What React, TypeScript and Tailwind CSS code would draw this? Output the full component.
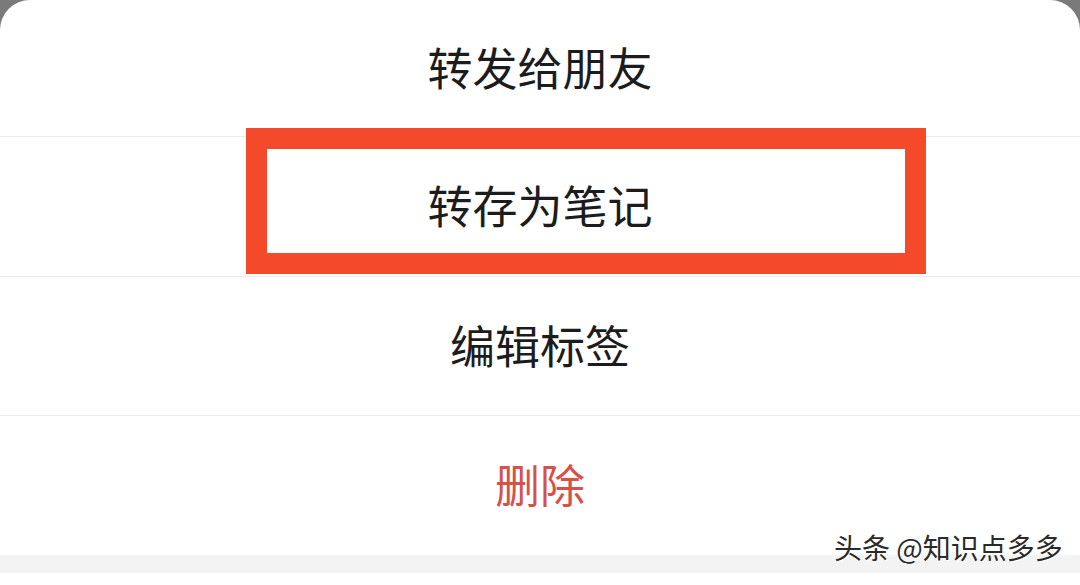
import React from "react";

export default function App() {
  const font = "font-['Noto_Sans_CJK_SC','Noto_Sans',sans-serif]";
  return (
    <div className={`relative w-[1080px] h-[585px] overflow-hidden bg-[#7a7a7a] ${font}`}>
      <div className="flex h-full flex-col rounded-t-[30px] bg-white">
        <div className="flex h-[137px] items-center justify-center border-b border-[#ececec] pb-[4px] text-[45px] leading-none text-[#1c1c1c]">
          转发给朋友
        </div>
        <div className="flex h-[140px] items-center justify-center border-b border-[#ececec] pb-[4px] text-[45px] leading-none text-[#1c1c1c]">
          转存为笔记
        </div>
        <div className="flex h-[139px] items-center justify-center border-b border-[#ececec] pb-[4px] text-[45px] leading-none text-[#1c1c1c]">
          编辑标签
        </div>
        <div className="flex h-[139px] items-center justify-center pb-[4px] text-[45px] leading-none text-[#d5524b]">
          删除
        </div>
        <div className="h-[18px] bg-[#f3f3f3]" />
        <div className="flex-1 bg-white" />
      </div>

      <div className="absolute left-[246px] top-[128px] h-[146px] w-[680px] border-[21px] border-[#f44a2b]" />

      <div className="absolute left-[834px] top-[530px] text-[28px] leading-[34px] whitespace-nowrap text-[#2a2a2a] [text-shadow:1px_1px_0_#ffffff,-1px_0_0_#ffffff]">
        头条 @知识点多多
      </div>
    </div>
  );
}
